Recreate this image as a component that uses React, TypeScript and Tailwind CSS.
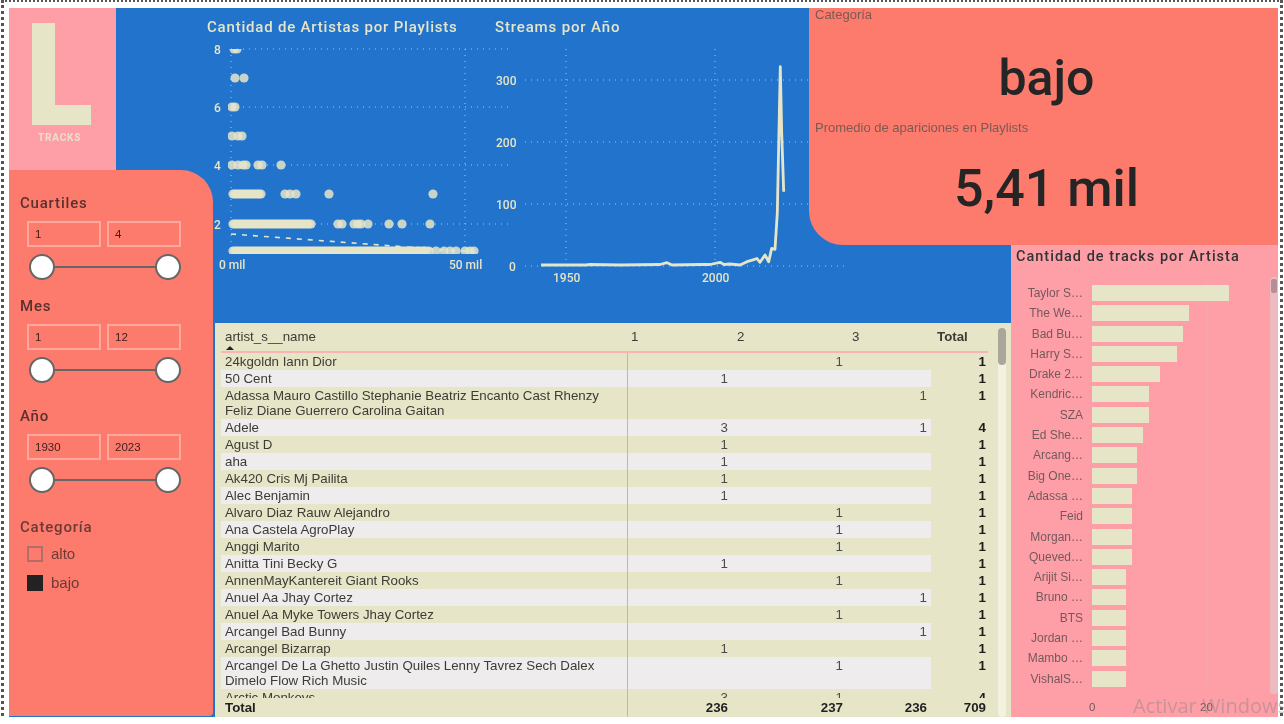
import React from "react";

const din = "font-['Roboto',sans-serif]";
const arial = "font-['Liberation_Sans',Arial,sans-serif]";

function Slicer({ title, a, b, gap }: { title: string; a: string; b: string; gap: string }) {
  return (
    <div className={gap}>
      <div className={`${din} text-[15px] leading-[18px] tracking-[0.8px] text-[#5c302c] font-medium`}>{title}</div>
      <div className="flex gap-[6px] pl-[7px] mt-[9px]">
        {[a, b].map((v, i) => (
          <div key={i} className={`${arial} w-[74px] h-[26px] border-2 border-[#ffa89f] pl-[6px] text-[11.5px] leading-[22px] text-[#40201e]`}>
            {v}
          </div>
        ))}
      </div>
      <div className="relative ml-[9px] w-[152px] h-[26px] mt-[7px] flex items-center justify-between">
        <div className="absolute left-[10px] right-[10px] h-[2px] bg-[#666]" />
        <div className="relative w-[26px] h-[26px] rounded-full bg-white border-2 border-[#666]" />
        <div className="relative w-[26px] h-[26px] rounded-full bg-white border-2 border-[#666]" />
      </div>
    </div>
  );
}

const range = (from: number, to: number, step: number) => {
  const out: number[] = [];
  for (let x = from; x <= to; x += step) out.push(x);
  return out;
};

const scatterRows: [number, number[]][] = [
  [49, [234, 237]],
  [78, [235, 244]],
  [107, [232, 235]],
  [136, [232, 238, 242]],
  [165, [232, 238, 243, 246, 258, 262, 281]],
  [194, [...range(233, 262, 2), 285, 290, 296, 329, 433]],
  [224, [...range(233, 312, 2), 338, 342, 354, 358, 361, 368, 389, 402, 430]],
  [251, [...range(233, 405, 2), ...range(408, 430, 3), 412, 418, 424, 436, 444, 450, 456, 465, 470, 474]],
];

function ScatterChart() {
  return (
    <svg className="block overflow-visible" width="300" height="240" viewBox="207 40 300 240">
      <g stroke="#a9c8e6" strokeWidth="1" strokeDasharray="1 5">
        <path d="M231 49H508M231 107H508M231 165H508M231 224H508M231 49V250M465 49V250" fill="none" />
      </g>
      <clipPath id="sc">
        <rect x="228" y="49" width="260" height="205" />
      </clipPath>
      <g clipPath="url(#sc)" fill="#e6e5c8" fillOpacity="0.85">
        {scatterRows.map(([y, xs]) => xs.map((x, i) => <circle key={`${y}-${x}-${i}`} cx={x} cy={y} r="4.6" />))}
      </g>
      <path d="M231 234L475 252" stroke="#e6e5c8" strokeWidth="1.6" strokeDasharray="5 6" fill="none" />
      <g fill="#e6e5c8" fontFamily="Roboto, sans-serif" fontSize="12" fontWeight="500">
        <text x="214" y="54">8</text>
        <text x="214" y="112">6</text>
        <text x="214" y="170">4</text>
        <text x="214" y="229">2</text>
        <text x="219" y="268.5">0 mil</text>
        <text x="449" y="268.5">50 mil</text>
      </g>
    </svg>
  );
}

function LineChart() {
  return (
    <svg className="block overflow-visible" width="360" height="240" viewBox="495 40 360 240">
      <g stroke="#a9c8e6" strokeWidth="1" strokeDasharray="1 5" fill="none">
        <path d="M525 80H845M525 142H845M525 204H845M525 266H845M566 49V262M715 49V262" />
      </g>
      <path
        d="M541 265L586 265L590 264.5L620 265L660 264.5L667 262.7L672 265L700 264.5L710 264.5L720 262.3L724 264.5L730 264L740 265L747 261.7L753 259.8L757 258.5L760 262.3L765 255L768.7 261.7L771.7 248.3L775 249.3L777.3 213L780.3 66.7L781.7 133L783.7 191.7"
        fill="none"
        stroke="#e6e5c8"
        strokeWidth="2.8"
        strokeLinejoin="round"
      />
      <g fill="#e6e5c8" fontFamily="Roboto, sans-serif" fontSize="12" fontWeight="500">
        <text x="496" y="85">300</text>
        <text x="496" y="147">200</text>
        <text x="496" y="209">100</text>
        <text x="509" y="271">0</text>
        <text x="553" y="281.5">1950</text>
        <text x="702" y="281.5">2000</text>
      </g>
    </svg>
  );
}

type Row = { name: string[]; v: [string, string, string]; t: string };
const one = (name: string, col: 0 | 1 | 2): Row => {
  const v: [string, string, string] = ["", "", ""];
  v[col] = "1";
  return { name: [name], v, t: "1" };
};
const rows: Row[] = [
  one("24kgoldn Iann Dior", 1),
  one("50 Cent", 0),
  { name: ["Adassa Mauro Castillo Stephanie Beatriz Encanto Cast Rhenzy", "Feliz Diane Guerrero Carolina Gaitan"], v: ["", "", "1"], t: "1" },
  { name: ["Adele"], v: ["3", "", "1"], t: "4" },
  one("Agust D", 0),
  one("aha", 0),
  one("Ak420 Cris Mj Pailita", 0),
  one("Alec Benjamin", 0),
  one("Alvaro Diaz Rauw Alejandro", 1),
  one("Ana Castela AgroPlay", 1),
  one("Anggi Marito", 1),
  one("Anitta Tini Becky G", 0),
  one("AnnenMayKantereit Giant Rooks", 1),
  one("Anuel Aa Jhay Cortez", 2),
  one("Anuel Aa Myke Towers Jhay Cortez", 1),
  one("Arcangel Bad Bunny", 2),
  one("Arcangel Bizarrap", 0),
  { name: ["Arcangel De La Ghetto Justin Quiles Lenny Tavrez Sech Dalex", "Dimelo Flow Rich Music"], v: ["", "1", ""], t: "1" },
  { name: ["Arctic Monkeys"], v: ["3", "1", ""], t: "4" },
];

const cols = "grid grid-cols-[406px_105px_115px_84px_58px]";

function Table() {
  return (
    <div className={`${arial} relative [grid-area:4/3/5/5] ml-[1px] bg-[#e6e5c8] flex flex-col pl-[6px] pr-[23px] text-[13.3px] leading-[15px] text-[#3d3b35] min-h-0`}>
      <div className="h-[30px] flex-none border-b-2 border-[#fbb4b4] relative">
        <div className="absolute left-[4px] top-[6px]">artist_s__name</div>
        <div className="absolute left-[5px] top-[23px] border-x-[4px] border-x-transparent border-b-[4px] border-b-[#222]" />
        <div className="absolute left-[410px] top-[6px]">1</div>
        <div className="absolute left-[516px] top-[6px]">2</div>
        <div className="absolute left-[631px] top-[6px]">3</div>
        <div className="absolute left-[716px] top-[6px] font-bold">Total</div>
      </div>
      <div className="flex-1 min-h-0 overflow-hidden">
        {rows.map((r, i) => (
          <div key={i} className={cols}>
            <div className={`${i % 2 === 1 ? "bg-[#eeecec]" : ""} pl-[4px] py-[1px]`}>
              {r.name.map((n) => <div key={n} className="whitespace-nowrap">{n}</div>)}
            </div>
            {r.v.map((x, j) => (
              <div key={j} className={`${i % 2 === 1 ? "bg-[#eeecec]" : ""} text-right pr-[4px] py-[1px] text-[#4f4a4a]`}>{x}</div>
            ))}
            <div className="text-right pr-[3px] py-[1px] font-bold text-[#1c1c1c]">{r.t}</div>
          </div>
        ))}
      </div>
      <div className={`${cols} flex-none h-[19px] font-bold text-[#1f1f1f] leading-[19px]`}>
        <div className="pl-[4px]">Total</div>
        <div className="text-right pr-[4px]">236</div>
        <div className="text-right pr-[4px]">237</div>
        <div className="text-right pr-[4px]">236</div>
        <div className="text-right pr-[3px]">709</div>
      </div>
      <div className="absolute left-[412px] top-[30px] bottom-0 w-[1px] bg-[#ff9aa3]" />
      <div className="absolute right-[5px] top-[5px] bottom-0 w-[8px] rounded-[4px] bg-[#f3f1df]">
        <div className="w-[8px] h-[37px] rounded-[4px] bg-[#a9a79a]" />
      </div>
    </div>
  );
}

const bars: [string, number][] = [
  ["Taylor S…", 137], ["The We…", 97], ["Bad Bu…", 91], ["Harry S…", 85], ["Drake 2…", 68],
  ["Kendric…", 57], ["SZA", 57], ["Ed She…", 51], ["Arcang…", 45], ["Big One…", 45],
  ["Adassa …", 40], ["Feid", 40], ["Morgan…", 40], ["Queved…", 40], ["Arijit Si…", 34],
  ["Bruno …", 34], ["BTS", 34], ["Jordan …", 34], ["Mambo …", 34], ["VishalS…", 34],
];

function BarChart() {
  return (
    <div className="relative [grid-area:3/5/5/6] bg-[#fe9fa7] min-h-0 flex flex-col">
      <div className={`${din} pl-[5px] pt-[3px] text-[14.5px] leading-[18px] tracking-[1px] font-medium text-[#333]`}>
        Cantidad de tracks por Artista
      </div>
      <div className="relative flex flex-col gap-[4.3px] mt-[19px]">
        <div className="absolute left-[195px] top-[-8px] h-[410px] w-[1px] bg-[#f9a8ae]" />
        {bars.map(([n, w]) => (
          <div key={n} className="relative flex items-center h-[16px]">
            <div className={`${arial} w-[72px] text-right text-[12px] text-[#74595c] whitespace-nowrap`}>{n}</div>
            <div className="ml-[9px] h-[16px] bg-[#e6e5c8]" style={{ width: w }} />
          </div>
        ))}
      </div>
      <div className={`${arial} relative h-[14px] mt-[13px] text-[11.5px] leading-[14px] text-[#74595c]`}>
        <span className="absolute left-[78px]">0</span>
        <span className="absolute left-[189px]">20</span>
      </div>
      <div className="absolute right-[0px] top-[32px] h-[417px] w-[8px] rounded-[3px] bg-[#ebbbc0]">
        <div className="mt-[2px] mx-[1px] h-[14px] rounded-[2px] bg-[#b78e94]" />
      </div>
    </div>
  );
}

export default function App() {
  return (
    <div className="w-[1284px] h-[724px] bg-white overflow-hidden blur-[0.35px]">
      <div className="relative ml-[1px] w-[1282px] h-[716px] border-x-[3px] border-t-[2px] border-dotted border-[#555] pl-[5px] pr-[2px] pt-[6px]">
        <div className="grid h-[709px] bg-[#2173cc] grid-cols-[107px_98px_595px_202px_267px] grid-rows-[162px_75px_78px_394px]">
          {/* logo */}
          <div className="[grid-area:1/1/2/2] bg-[#fe9fa7] flex flex-col items-start pl-[23px] pt-[15px]">
            <div className="w-[59px] h-[102px] border-l-[23px] border-b-[20px] border-[#e6e5c8]" />
            <div className={`${din} ml-[6px] mt-[7px] text-[10px] leading-[12px] tracking-[0.8px] font-bold text-[#ecdfc8]`}>TRACKS</div>
          </div>

          {/* charts */}
          <div className="[grid-area:1/2/4/5] pl-[91px]">
            <div className="flex">
              <div className="w-[288px]">
                <div className={`${din} h-[32px] pt-[9px] text-[15px] leading-[20px] tracking-[0.8px] font-medium text-[#e6e5c8] whitespace-nowrap`}>
                  Cantidad de Artistas por Playlists
                </div>
                <ScatterChart />
              </div>
              <div>
                <div className={`${din} h-[32px] pt-[9px] text-[15px] leading-[20px] tracking-[0.85px] font-medium text-[#e6e5c8]`}>
                  Streams por Año
                </div>
                <LineChart />
              </div>
            </div>
          </div>

          {/* slicers */}
          <div className="[grid-area:2/1/5/3] z-10 bg-[#fd7b6c] rounded-tr-[32px] rounded-br-[4px] mr-[1px] mb-[1px] pl-[11px] pt-[24px]">
            <Slicer title="Cuartiles" a="1" b="4" gap="" />
            <Slicer title="Mes" a="1" b="12" gap="mt-[17px]" />
            <Slicer title="Año" a="1930" b="2023" gap="mt-[24px]" />
            <div className={`${din} mt-[25px] text-[15px] leading-[18px] tracking-[0.8px] font-medium text-[#6c3a36]`}>Categoría</div>
            <div className={`${arial} pl-[7px] mt-[10px] flex items-center gap-[8px] text-[15px] leading-[16px] text-[#6c3a36]`}>
              <span className="w-[16px] h-[16px] border-2 border-[#b06e66]" />
              alto
            </div>
            <div className={`${arial} pl-[7px] mt-[13px] flex items-center gap-[8px] text-[15px] leading-[16px] text-[#6c3a36]`}>
              <span className="w-[16px] h-[16px] bg-[#222]" />
              bajo
            </div>
          </div>

          {/* KPI */}
          <div className="[grid-area:1/4/3/6] z-10 bg-[#fd7b6c] rounded-bl-[34px] overflow-hidden pl-[6px] flex flex-col">
            <div className={`${arial} text-[13px] leading-[14px] text-[#7c5953]`}>Categoría</div>
            <div className={`${din} text-center font-medium text-[50px] leading-[60px] mt-[26px] text-[#252525]`}>bajo</div>
            <div className={`${arial} text-[13px] leading-[14px] mt-[13px] text-[#7c5953]`}>Promedio de apariciones en Playlists</div>
            <div className={`${din} text-center font-medium text-[52px] leading-[62px] mt-[23px] text-[#252525]`}>5,41 mil</div>
          </div>

          <Table />
          <BarChart />
        </div>
        <div className="absolute left-[1129px] top-[692px] z-20 text-[20px] leading-[24px] text-[#80808066] font-['Open_Sans',sans-serif] whitespace-nowrap">
          Activar Windows
        </div>
      </div>
    </div>
  );
}
